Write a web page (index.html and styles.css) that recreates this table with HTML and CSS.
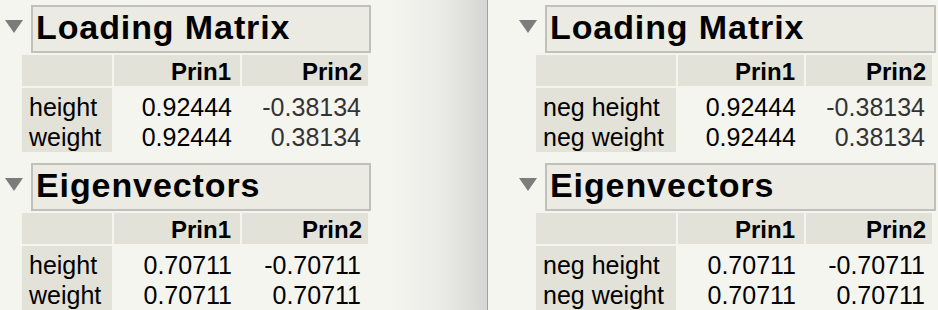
FILE: index.html
```html
<!DOCTYPE html>
<html>
<head>
<meta charset="utf-8">
<link rel="stylesheet" href="styles.css">
</head>
<body>
<div class="window">
  <div class="panel left">
    <div class="section">
      <div class="head">
        <svg class="tri" width="18" height="13" viewBox="0 0 18 13"><polygon points="0,0 18,0 9,13" fill="#7c7c7a"/></svg>
        <div class="title t-left">Loading Matrix</div>
      </div>
      <div class="grid g-left">
        <div class="hdr"></div><div class="hdr c2">Prin1</div><div class="hdr c3">Prin2</div>
        <div class="lbl r1">height</div><div class="num c2 r1">0.92444</div><div class="num c3 r1 soft">-0.38134</div>
        <div class="lbl">weight</div><div class="num c2">0.92444</div><div class="num c3 soft">0.38134</div>
      </div>
    </div>
    <div class="section">
      <div class="head">
        <svg class="tri" width="18" height="13" viewBox="0 0 18 13"><polygon points="0,0 18,0 9,13" fill="#7c7c7a"/></svg>
        <div class="title t-left">Eigenvectors</div>
      </div>
      <div class="grid g-left">
        <div class="hdr"></div><div class="hdr c2">Prin1</div><div class="hdr c3">Prin2</div>
        <div class="lbl r1">height</div><div class="num c2 r1">0.70711</div><div class="num c3 r1">-0.70711</div>
        <div class="lbl">weight</div><div class="num c2">0.70711</div><div class="num c3">0.70711</div>
      </div>
    </div>
  </div>
  <div class="panel right">
    <div class="section">
      <div class="head">
        <svg class="tri" width="18" height="13" viewBox="0 0 18 13"><polygon points="0,0 18,0 9,13" fill="#7c7c7a"/></svg>
        <div class="title t-right">Loading Matrix</div>
      </div>
      <div class="grid g-right">
        <div class="hdr"></div><div class="hdr c2">Prin1</div><div class="hdr c3">Prin2</div>
        <div class="lbl r1">neg height</div><div class="num c2 r1">0.92444</div><div class="num c3 r1 soft">-0.38134</div>
        <div class="lbl">neg weight</div><div class="num c2">0.92444</div><div class="num c3 soft">0.38134</div>
      </div>
    </div>
    <div class="section">
      <div class="head">
        <svg class="tri" width="18" height="13" viewBox="0 0 18 13"><polygon points="0,0 18,0 9,13" fill="#7c7c7a"/></svg>
        <div class="title t-right">Eigenvectors</div>
      </div>
      <div class="grid g-right">
        <div class="hdr"></div><div class="hdr c2">Prin1</div><div class="hdr c3">Prin2</div>
        <div class="lbl r1">neg height</div><div class="num c2 r1">0.70711</div><div class="num c3 r1">-0.70711</div>
        <div class="lbl">neg weight</div><div class="num c2">0.70711</div><div class="num c3">0.70711</div>
      </div>
    </div>
  </div>
</div>
</body>
</html>
```
FILE: styles.css
```css
html, body {
  margin: 0;
  padding: 0;
  background: #f5f5f0;
  overflow: hidden;
}
body {
  font-family: "Liberation Sans", Arial, Helvetica, sans-serif;
  color: #000;
}
.window {
  display: flex;
  width: 938px;
  height: 310px;
  overflow: hidden;
}
.panel {
  box-sizing: border-box;
  height: 310px;
}
.left {
  width: 488px;
  flex: none;
  padding: 5px 0 0 5px;
  background: linear-gradient(to right, #f5f5f0 0px, #f5f5f0 390px, #ebebe7 440px, #d6d6d2 487px);
  border-right: 1px solid #a2a29f;
}
.right {
  flex: 1;
  padding: 5px 0 0 31px;
}
.section {
  margin-bottom: 11px;
}
.head {
  display: flex;
  align-items: flex-start;
}
.tri {
  display: block;
  margin-top: 15px;
  margin-right: 8px;
  flex: none;
}
.title {
  box-sizing: border-box;
  height: 48px;
  border: 2px solid #c1c1bb;
  background: #ebeae3;
  font-weight: bold;
  font-size: 34px;
  letter-spacing: 0.9px;
  line-height: 40px;
  padding: 0 0 4px 3px;
  white-space: nowrap;
}
.t-left { width: 340px; }
.t-right { width: 391px; }
.grid {
  display: grid;
  column-gap: 2px;
  margin-left: 17px;
  margin-top: 2px;
}
.g-left { grid-template-columns: 90px 126px 126px; }
.g-right { grid-template-columns: 140px 126px 126px; }
.hdr {
  box-sizing: border-box;
  height: 31px;
  margin-bottom: 2px;
  background: #e3e2d9;
  font-weight: bold;
  font-size: 24px;
  line-height: 31px;
  padding-top: 1px;
  text-align: right;
}
.hdr.c2 { padding-right: 9px; }
.hdr.c3 { padding-right: 6px; }
.lbl, .num {
  font-size: 25px;
  line-height: 30px;
  white-space: nowrap;
}
.lbl {
  background: #e3e2d9;
  padding-left: 7px;
}
.num { text-align: right; }
.num.c2 { padding-right: 8px; }
.num.c3 { padding-right: 7px; }
.r1 { padding-top: 4px; }
.soft { color: #333; }
```
